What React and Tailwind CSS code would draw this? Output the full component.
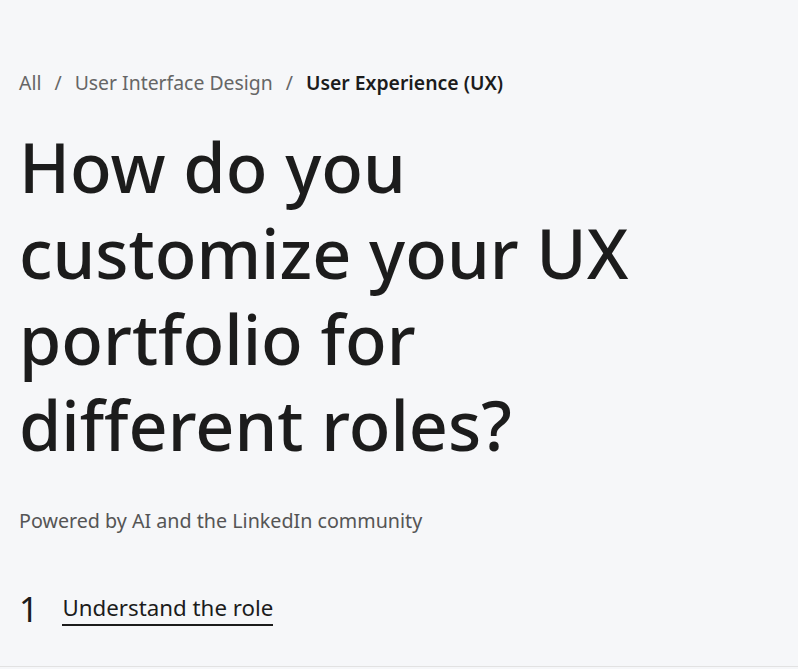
export default function App() {
  return (
    <div
      className="min-h-screen w-full bg-[#f6f7f9] text-[#1c1c1c]"
      style={{ fontFamily: '"Noto Sans", "Open Sans", sans-serif' }}
    >
      <div className="h-[667px] border-b border-[#e2e2e2] px-[19px] pt-[69px] overflow-hidden">
        <nav className="flex items-center text-[19.4px] leading-[28px]">
          <span className="text-[#666]">All</span>
          <span className="mx-[13px] text-[#666]">/</span>
          <span className="text-[#666]">User Interface Design</span>
          <span className="mx-[13px] text-[#666]">/</span>
          <span className="font-semibold text-[#1c1c1c]">User Experience (UX)</span>
        </nav>

        <h1 className="mt-[27px] text-[68.3px] leading-[86px] font-medium text-[#1c1c1c] max-w-[640px]">
          How do you customize your UX portfolio for different roles?
        </h1>

        <p className="mt-[39px] text-[19.7px] leading-[28px] text-[#555]">
          Powered by AI and the LinkedIn community
        </p>

        <div className="mt-[54px] flex items-center gap-[24px]">
          <span className="text-[34px] leading-[40px] font-normal">1</span>
          <a className="text-[22.3px] leading-[32px] border-b-2 border-[#1c1c1c]">
            Understand the role
          </a>
        </div>
      </div>
    </div>
  );
}
